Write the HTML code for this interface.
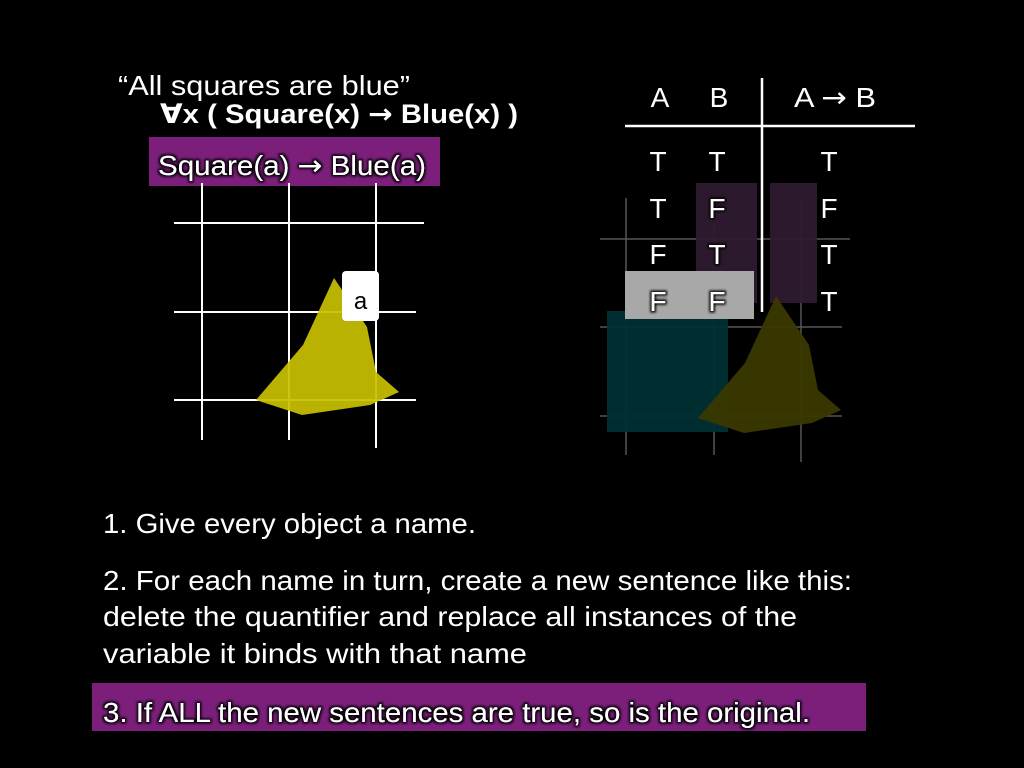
<!DOCTYPE html>
<html><head><meta charset="utf-8"><style>
html,body{margin:0;padding:0;background:#000;width:1024px;height:768px;overflow:hidden}
svg{display:block}
text{font-family:"Liberation Sans","DejaVu Sans",sans-serif;fill:#fff}
.ar{font-family:"DejaVu Sans",sans-serif}
</style></head><body>
<svg width="1024" height="768" viewBox="0 0 1024 768" xmlns="http://www.w3.org/2000/svg">
<defs>
<filter id="sh" x="-10%" y="-30%" width="120%" height="160%"><feMorphology in="SourceAlpha" operator="dilate" radius="1.5" result="d"/><feGaussianBlur in="d" stdDeviation="1.2" result="b"/><feFlood flood-color="#000"/><feComposite in2="b" operator="in"/><feMerge><feMergeNode/><feMergeNode in="SourceGraphic"/></feMerge></filter>
</defs>
<rect width="1024" height="768" fill="#000"/>

<text x="118" y="95" font-size="28" textLength="292" lengthAdjust="spacingAndGlyphs">“All squares are blue”</text>
<text x="160" y="123" font-size="27" font-weight="bold" textLength="358" lengthAdjust="spacingAndGlyphs">∀x ( Square(x) <tspan class="ar">→</tspan> Blue(x) )</text>

<rect x="149" y="137" width="291" height="49" fill="#7b1f7b"/>
<text x="158" y="175" font-size="28" textLength="268" lengthAdjust="spacingAndGlyphs" filter="url(#sh)">Square(a) <tspan class="ar">→</tspan> Blue(a)</text>

<g stroke="#fff" stroke-width="2">
<line x1="202" y1="183" x2="202" y2="440"/>
<line x1="289" y1="183" x2="289" y2="440"/>
<line x1="376" y1="183" x2="376" y2="448"/>
<line x1="174" y1="223" x2="424" y2="223"/>
<line x1="174" y1="312" x2="416" y2="312"/>
<line x1="174" y1="400" x2="416" y2="400"/>
</g>
<polygon points="334,278 367,327 376,372 399,392 370,405 302,415 256,400 303,345" fill="#c8c000" fill-opacity="0.93"/>
<rect x="342" y="271" width="37" height="50" rx="4" fill="#fff"/>
<text x="360.5" y="309" font-size="24" text-anchor="middle" style="fill:#000">a</text>

<g stroke="#555" stroke-width="1.5">
<line x1="626" y1="198" x2="626" y2="455"/>
<line x1="714" y1="220" x2="714" y2="455"/>
<line x1="801" y1="200" x2="801" y2="462"/>
<line x1="600" y1="239" x2="850" y2="239"/>
<line x1="600" y1="327" x2="842" y2="327"/>
<line x1="600" y1="416" x2="842" y2="416"/>
</g>
<rect x="696" y="183" width="61" height="120" fill="#2f1a2f" opacity="0.95"/>
<rect x="770" y="183" width="47" height="120" fill="#2f1a2f" opacity="0.95"/>
<rect x="607" y="311" width="121" height="121" fill="#002f33" opacity="0.95"/>
<polygon points="776,296 809,345 818,390 841,410 812,423 744,433 698,418 745,363" fill="#3a3800" opacity="0.95"/>
<rect x="625" y="271" width="129" height="48" fill="#a8a8a8"/>

<g stroke="#fff" stroke-width="2.5">
<line x1="762" y1="78" x2="762" y2="312"/>
<line x1="625" y1="126" x2="915" y2="126"/>
</g>
<g font-size="28" text-anchor="middle">
<text x="660" y="107">A</text>
<text x="719" y="107">B</text>
<text x="835" y="107" textLength="82" lengthAdjust="spacingAndGlyphs">A <tspan class="ar">→</tspan> B</text>
<text x="658" y="171">T</text><text x="717" y="171">T</text><text x="829" y="171">T</text>
<text x="658" y="218">T</text><text x="717" y="218" filter="url(#sh)">F</text><text x="829" y="218">F</text>
<text x="658" y="264">F</text><text x="717" y="264" filter="url(#sh)">T</text><text x="829" y="264">T</text>
<text x="658" y="311" filter="url(#sh)">F</text><text x="717" y="311" filter="url(#sh)">F</text><text x="829" y="311">T</text>
</g>

<g font-size="28">
<text x="103" y="533" textLength="373" lengthAdjust="spacingAndGlyphs">1. Give every object a name.</text>
<text x="103" y="590" textLength="749" lengthAdjust="spacingAndGlyphs">2. For each name in turn, create a new sentence like this:</text>
<text x="103" y="626" textLength="694" lengthAdjust="spacingAndGlyphs">delete the quantifier and replace all instances of the</text>
<text x="103" y="663" textLength="424" lengthAdjust="spacingAndGlyphs">variable it binds with that name</text>
</g>
<rect x="92" y="683" width="774" height="48" fill="#7b1f7b"/>
<text x="103" y="722" font-size="28" textLength="707" lengthAdjust="spacingAndGlyphs" filter="url(#sh)">3. If ALL the new sentences are true, so is the original.</text>
</svg>
</body></html>
